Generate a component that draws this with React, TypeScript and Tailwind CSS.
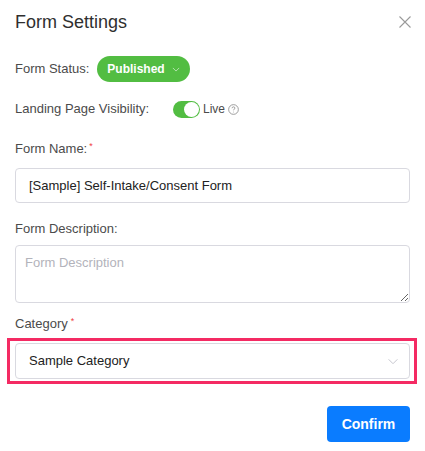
import React from 'react';

const font = { fontFamily: '"Liberation Sans", Arial, sans-serif' };

function Chevron({ className }: { className?: string }) {
  return (
    <svg viewBox="0 0 12 8" className={className} fill="none" stroke="currentColor" strokeWidth="1.1">
      <path d="M1 1.5 L6 6.5 L11 1.5" />
    </svg>
  );
}

export default function App() {
  return (
    <div className="w-[425px] h-[451px] bg-white px-[15px] text-[13px] text-[#4b4b4b]" style={font}>
      <div className="flex items-center justify-between pt-[10px]">
        <h1 className="text-[18px] leading-[24px] text-[#2f2f2f]">Form Settings</h1>
        <svg viewBox="0 0 12 12" className="w-[12px] h-[12px] mr-[-1px] text-[#9a9a9a]" stroke="currentColor" strokeWidth="1.1">
          <path d="M0.5 0.5 L11.5 11.5 M11.5 0.5 L0.5 11.5" />
        </svg>
      </div>

      <div className="flex items-center mt-[22px] h-[26px]">
        <span className="w-[82px]">Form Status:</span>
        <button className="flex items-center gap-[7px] h-[26px] w-[93px] justify-center rounded-full bg-[#52bd42] text-white text-[12px] font-bold">
          Published
          <Chevron className="w-[8px] h-[5px] text-white/80" />
        </button>
      </div>

      <div className="flex items-center mt-[14px] h-[26px]">
        <span className="w-[158px]">Landing Page Visibility:</span>
        <div className="w-[27px] h-[17px] rounded-full bg-[#52bd42] flex items-center justify-end pr-[1px]">
          <div className="w-[15px] h-[15px] rounded-full bg-white"></div>
        </div>
        <span className="ml-[3px] text-[12px]">Live</span>
        <svg viewBox="0 0 12 12" className="ml-[3px] w-[11px] h-[11px] text-[#8a8a8a]" fill="none" stroke="currentColor" strokeWidth="0.9">
          <circle cx="6" cy="6" r="5.3" />
          <path d="M4.4 4.6 C4.4 3.6 5.1 3.1 6 3.1 C6.9 3.1 7.6 3.7 7.6 4.5 C7.6 5.5 6 5.6 6 6.9" />
          <circle cx="6" cy="8.8" r="0.5" fill="currentColor" stroke="none" />
        </svg>
      </div>

      <div className="mt-[18px] leading-[18px]">
        Form Name:<sup className="text-[#f04040] text-[9px] ml-[2px]">*</sup>
      </div>
      <div className="mt-[10px] h-[35px] rounded-[4px] border border-[#d9d9e0] flex items-center px-[13px] text-[#222]">
        [Sample] Self-Intake/Consent Form
      </div>

      <div className="mt-[17px] leading-[18px]">Form Description:</div>
      <textarea
        className="mt-[7px] block w-full h-[58px] rounded-[4px] border border-[#d9d9e0] px-[9px] py-[7px] text-[13px] text-[#222] placeholder:text-[#b3b3bb] outline-none"
        placeholder="Form Description"
      />

      <div className="mt-[12px] leading-[18px]">
        Category<sup className="text-[#f04040] text-[9px] ml-[3px]">*</sup>
      </div>
      <div className="mt-[5px] -ml-[8px] -mr-[7px] border-[3px] border-[#f42a63] pl-[5px] pr-[4px] py-[2px]">
        <div className="h-[36px] rounded-[4px] border border-[#d9d9e0] flex items-center justify-between pl-[13px] pr-[10px] text-[#222]">
          <span>Sample Category</span>
          <Chevron className="w-[12px] h-[7px] text-[#c4c4cc]" />
        </div>
      </div>

      <div className="flex justify-end mt-[22px]">
        <button className="w-[83px] h-[36px] rounded-[4px] bg-[#0a7cff] text-white text-[14px] font-bold">
          Confirm
        </button>
      </div>
    </div>
  );
}
